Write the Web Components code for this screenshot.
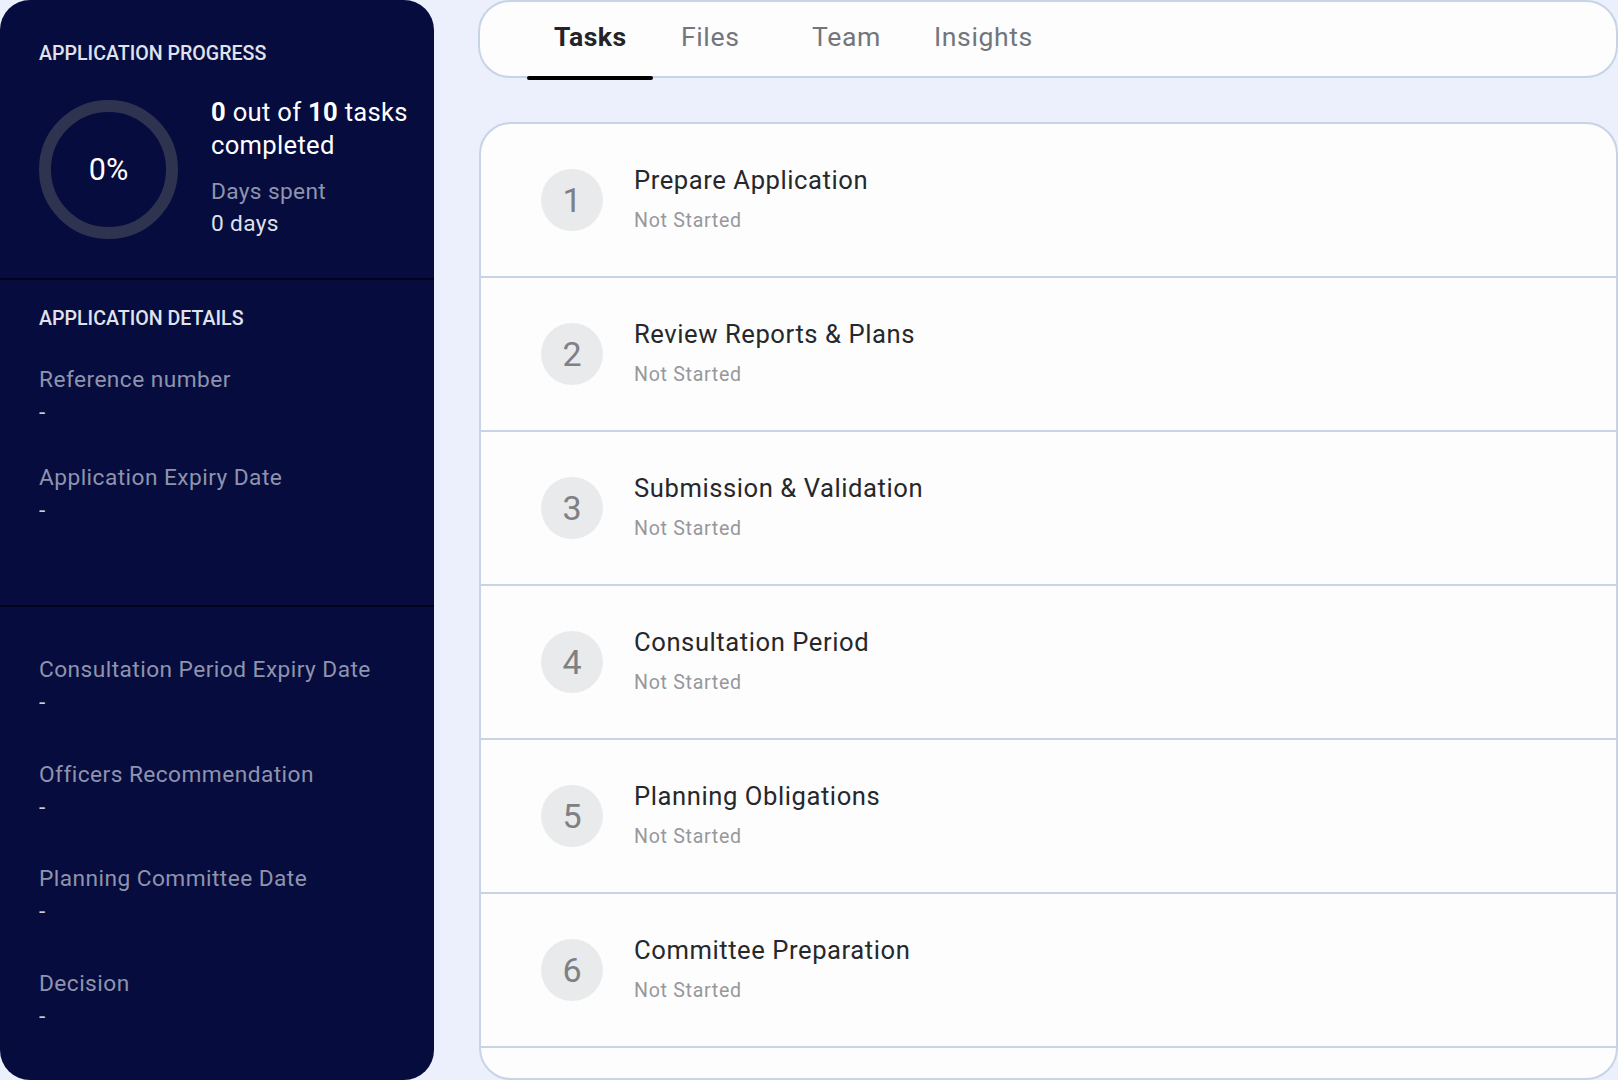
<!DOCTYPE html>
<html lang="en"><head><meta charset="utf-8"><title>Application</title>
<style>
html,body{margin:0;padding:0;height:1080px;overflow:hidden;background:#ecf0fd;font-family:Roboto,"Liberation Sans",sans-serif}
app-shell{--border:#c6d4e6}
</style></head><body>
<app-shell>
  <side-panel slot="side">
    <side-section pad="42" gap="0" line="1">
      <sec-title>APPLICATION PROGRESS</sec-title>
      <progress-summary done="0" total="10" days="0 days"></progress-summary>
    </side-section>
    <side-section pad="27" gap="32" line="1" h="327">
      <sec-title class="d">APPLICATION DETAILS</sec-title>
      <detail-item label="Reference number"></detail-item>
      <detail-item label="Application Expiry Date"></detail-item>
    </side-section>
    <side-section pad="46" gap="38.6">
      <detail-item label="Consultation Period Expiry Date"></detail-item>
      <detail-item label="Officers Recommendation"></detail-item>
      <detail-item label="Planning Committee Date"></detail-item>
      <detail-item label="Decision"></detail-item>
    </side-section>
  </side-panel>
  <main-column slot="main">
    <tab-bar>
      <tab-item active w="126">Tasks</tab-item>
      <tab-item w="131">Files</tab-item>
      <tab-item w="122">Team</tab-item>
      <tab-item w="124">Insights</tab-item>
    </tab-bar>
    <task-list>
      <task-row n="1" name="Prepare Application"></task-row>
      <task-row n="2" name="Review Reports &amp; Plans"></task-row>
      <task-row n="3" name="Submission &amp; Validation"></task-row>
      <task-row n="4" name="Consultation Period"></task-row>
      <task-row n="5" name="Planning Obligations"></task-row>
      <task-row n="6" name="Committee Preparation"></task-row>
    </task-list>
  </main-column>
</app-shell>
<script>
function def(name, css, html, init){
  customElements.define(name, class extends HTMLElement{
    connectedCallback(){
      if(this.shadowRoot) return;
      const a=k=>this.getAttribute(k);
      const r=this.attachShadow({mode:'open'});
      r.innerHTML='<style>'+css+'</style>'+(typeof html==='function'?html(a):html);
      if(init) init(this,a);
    }
  });
}
def('app-shell',`:host{display:grid;grid-template-columns:434px 1fr;column-gap:44px;width:1618px;height:1080px}`,
  `<slot name="side"></slot><slot name="main"></slot>`);
def('side-panel',`:host{display:flex;flex-direction:column;height:1080px;background:#060c3e;border-radius:30px;overflow:hidden;color:#fff}`,`<slot></slot>`);
def('side-section',`:host{display:flex;flex-direction:column;box-sizing:border-box;padding:0 10px 0 39px}
  :host([line]){border-bottom:2px solid #01031c}`,`<slot></slot>`,(el,a)=>{
    el.style.paddingTop=a('pad')+'px';
    el.style.gap=a('gap')+'px';
    if(a('h')) el.style.height=a('h')+'px';
    else if(a('line')) el.style.height='280px';
});
def('sec-title',`:host{display:block;font:500 19.6px/24px Roboto,sans-serif;color:#e0e3ec;white-space:nowrap}`,`<slot></slot>`);
def('progress-summary',`:host{display:flex;gap:33px;margin-top:30px}
  .ring{position:relative;flex:none;width:139px;height:139px;margin-top:4px;display:flex;align-items:center;justify-content:center}
  svg{position:absolute;inset:0}
  .pct{font:400 30.5px/36px Roboto,sans-serif;color:#fff}
  .big{font:400 25.6px/33px Roboto,sans-serif;color:#fff;letter-spacing:.3px;white-space:nowrap}
  b{font-weight:700}
  .lab{font:400 22.7px/32px Roboto,sans-serif;color:#8f93ad;margin-top:14px;letter-spacing:.35px}
  .val{font:400 22.7px/32px Roboto,sans-serif;color:#dfe1ea;letter-spacing:.35px}`,
  a=>`<div class="ring"><svg width="139" height="139" viewBox="0 0 139 139"><circle cx="69.5" cy="69.5" r="63.5" fill="none" stroke="#2e3350" stroke-width="12"/></svg><span class="pct">0%</span></div>
  <div><div class="big"><b>${a('done')}</b> out of <b>${a('total')}</b> tasks<br>completed</div><div class="lab">Days spent</div><div class="val">${a('days')}</div></div>`);
def('detail-item',`:host{display:block;font:400 22.7px/33px Roboto,sans-serif;letter-spacing:.45px;white-space:nowrap}
  .l{color:#8f93ad}.v{color:#c9cbd8}`,a=>`<div class="l">${a('label')}</div><div class="v">-</div>`);
def('main-column',`:host{display:flex;flex-direction:column;gap:44px}`,`<slot></slot>`);
def('tab-bar',`:host{display:flex;box-sizing:border-box;height:78px;background:#fdfdfd;border:2px solid var(--border);border-radius:32px;padding-left:47px}`,`<slot></slot>`);
def('tab-item',`:host{display:block;box-sizing:border-box;position:relative;height:76px;padding:0 0 0 28px;font:400 26.6px/70px Roboto,sans-serif;letter-spacing:.6px;color:#72757c;white-space:nowrap}
  :host([active]){font-weight:700;color:#222428;letter-spacing:.45px;padding-left:27px}
  :host([active])::after{content:"";position:absolute;left:0;right:0;bottom:-2px;height:4px;border-radius:2px;background:#000}`,`<slot></slot>`,(el,a)=>{el.style.width=a('w')+'px'});
def('task-list',`:host{display:block;box-sizing:border-box;height:958px;margin-left:1px;background:#fdfdfd;border:2px solid var(--border);border-radius:32px;overflow:hidden}`,`<slot></slot>`);
def('task-row',`:host{display:flex;align-items:center;box-sizing:border-box;height:154px;padding:0 0 0 60px;gap:31px;border-bottom:2px solid var(--border)}
  .n{flex:none;width:62px;height:62px;border-radius:50%;background:#e9eaeb;color:#7e8085;font:400 34px/62px Roboto,sans-serif;text-align:center}
  .name{font:400 25.6px/36px Roboto,sans-serif;color:#26282c;letter-spacing:.57px}
  .st{font:400 19.6px/26px Roboto,sans-serif;color:#96989c;letter-spacing:.7px;margin-top:10px}
  .t{margin-top:-5px}`,a=>`<div class="n">${a('n')}</div><div class="t"><div class="name">${a('name')}</div><div class="st">Not Started</div></div>`);
</script>
</body></html>
